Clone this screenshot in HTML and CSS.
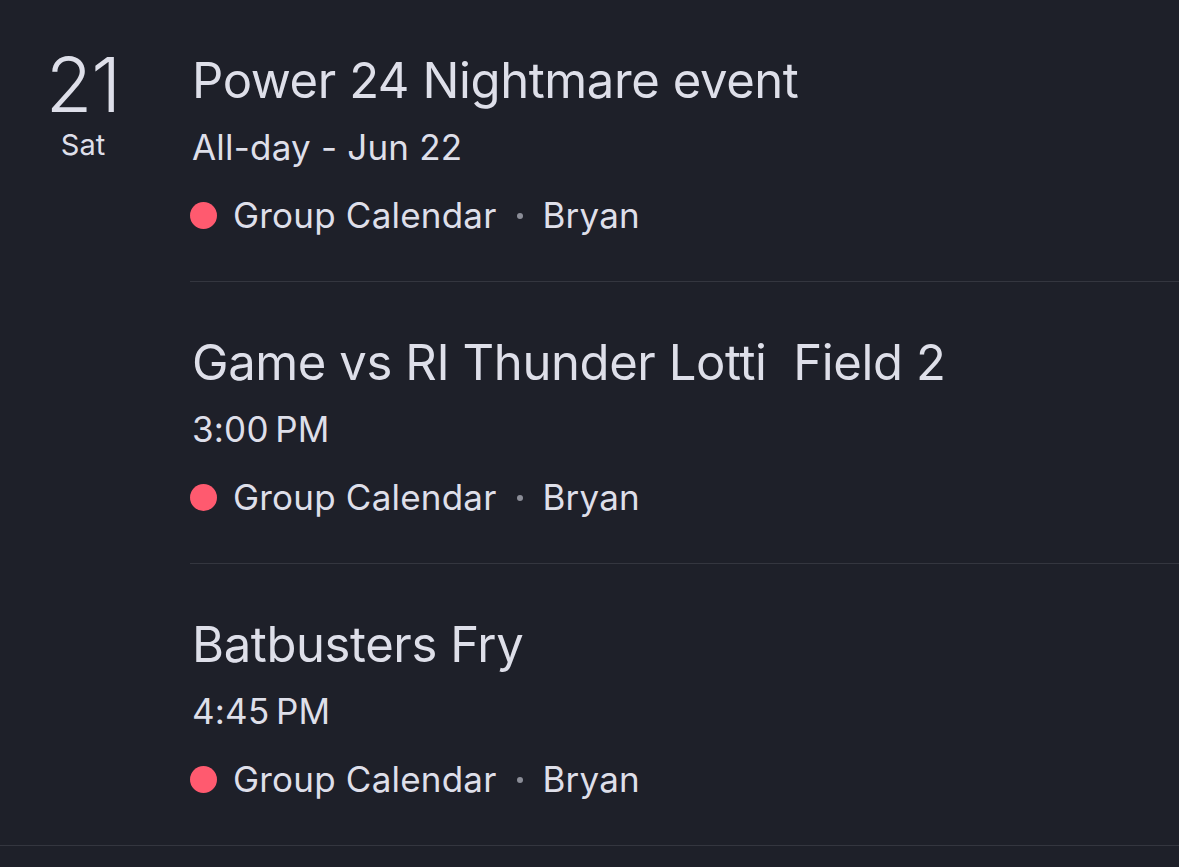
FILE: index.html
```html
<!DOCTYPE html>
<html lang="en">
<head>
    <meta charset="UTF-8">
    <title>Agenda</title>
    <link rel="stylesheet" href="styles.css">
</head>
<body>
    <section class="day">
        <div class="date">
            <div class="date-num">21</div>
            <div class="date-name">Sat</div>
        </div>
        <div class="events">
            <div class="event">
                <div class="event-title">Power 24 Nightmare event</div>
                <div class="event-time">All-day - Jun 22</div>
                <div class="event-meta">
                    <span class="dot"></span>
                    <span>Group Calendar</span>
                    <span class="sep"></span>
                    <span>Bryan</span>
                </div>
            </div>
            <div class="event">
                <div class="event-title">Game vs RI Thunder Lotti&nbsp; Field 2</div>
                <div class="event-time">3:00&#8201;PM</div>
                <div class="event-meta">
                    <span class="dot"></span>
                    <span>Group Calendar</span>
                    <span class="sep"></span>
                    <span>Bryan</span>
                </div>
            </div>
            <div class="event">
                <div class="event-title">Batbusters Fry</div>
                <div class="event-time">4:45&#8201;PM</div>
                <div class="event-meta">
                    <span class="dot"></span>
                    <span>Group Calendar</span>
                    <span class="sep"></span>
                    <span>Bryan</span>
                </div>
            </div>
        </div>
    </section>
</body>
</html>
```

FILE: styles.css
```css
* {
    box-sizing: border-box;
}

body {
    margin: 0;
    background-color: #1e2029;
    color: #dedfe9;
    font-family: Inter, "Noto Sans", sans-serif;
    overflow: hidden;
}

.day {
    display: flex;
    border-bottom: 1px solid #34363f;
}

.date {
    width: 166px;
    flex-shrink: 0;
    text-align: center;
    padding-top: 48px;
}

.date-num {
    font-size: 76px;
    font-weight: 300;
    line-height: 72px;
    letter-spacing: -1px;
}

.date-name {
    font-size: 29px;
    line-height: 34px;
    margin-top: 8px;
}

.events {
    flex: 1;
    margin-left: 24px;
}

.event {
    padding: 51px 0 44px 2px;
    border-bottom: 1px solid #34363f;
}

.event:last-child {
    border-bottom: none;
}

.event-title {
    font-size: 49px;
    line-height: 60px;
    letter-spacing: -0.4px;
}

.event-time {
    font-size: 35px;
    line-height: 44px;
    margin-top: 14px;
    letter-spacing: 0.2px;
}

.event-meta {
    display: flex;
    align-items: center;
    font-size: 35px;
    line-height: 44px;
    margin-top: 24px;
    margin-left: -2px;
    letter-spacing: 0.2px;
}

.dot {
    width: 27px;
    height: 27px;
    border-radius: 50%;
    background-color: #ff5a6f;
    margin-right: 16px;
}

.sep {
    width: 6px;
    height: 6px;
    border-radius: 50%;
    background-color: #8b8d97;
    margin: 2px 20px 0;
}
```
